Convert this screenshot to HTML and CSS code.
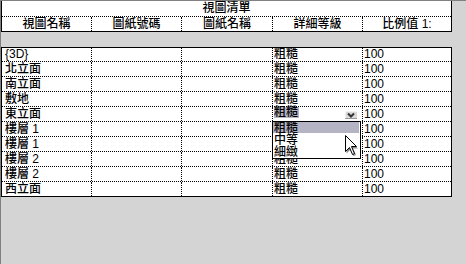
FILE: index.html
```html
<!DOCTYPE html>
<html lang="zh-Hant">
<head>
  <meta charset="UTF-8">
  <title>視圖清單</title>
  <link rel="stylesheet" href="styles.css">
</head>
<body>
  <div class="frame">
    <!-- 表頭 -->
    <div class="sheet-head">
      <div class="title">視圖清單</div>
      <div class="row head-row">
        <div class="cell">視圖名稱</div>
        <div class="cell">圖紙號碼</div>
        <div class="cell">圖紙名稱</div>
        <div class="cell">詳細等級</div>
        <div class="cell">比例值 1:</div>
      </div>
    </div>

    <div class="gap"></div>

    <!-- 表身 -->
    <div class="sheet-body">
      <div class="row first">
        <div class="cell name">{3D}</div><div class="cell"></div><div class="cell"></div>
        <div class="cell">粗糙</div><div class="cell">100</div>
      </div>
      <div class="row">
        <div class="cell name">北立面</div><div class="cell"></div><div class="cell"></div>
        <div class="cell">粗糙</div><div class="cell">100</div>
      </div>
      <div class="row">
        <div class="cell name">南立面</div><div class="cell"></div><div class="cell"></div>
        <div class="cell">粗糙</div><div class="cell">100</div>
      </div>
      <div class="row">
        <div class="cell name">敷地</div><div class="cell"></div><div class="cell"></div>
        <div class="cell">粗糙</div><div class="cell">100</div>
      </div>
      <div class="row">
        <div class="cell name">東立面</div><div class="cell"></div><div class="cell"></div>
        <div class="cell combo">
          <span class="picked">粗糙</span>
          <span class="combo-btn">
            <svg width="12" height="8" viewBox="0 0 12 8">
              <rect x="0" y="0" width="12" height="8" fill="#d9d9d9"/>
              <line x1="0" y1="0.5" x2="12" y2="0.5" stroke="#f2f2f2"/>
              <line x1="0.5" y1="0" x2="0.5" y2="8" stroke="#f2f2f2"/>
              <line x1="0" y1="7.5" x2="12" y2="7.5" stroke="#9a9a9a"/>
              <path d="M3 2.5 L6 5.5 L9 2.5" fill="none" stroke="#333" stroke-width="2"/>
            </svg>
          </span>
          <!-- 下拉清單 -->
          <div class="combo-list">
            <div class="option active">粗糙</div>
            <div class="option">中等</div>
            <div class="option">細緻</div>
          </div>
        </div>
        <div class="cell">100</div>
      </div>
      <div class="row">
        <div class="cell name">樓層 1</div><div class="cell"></div><div class="cell"></div>
        <div class="cell hidden-under">粗糙</div><div class="cell">100</div>
      </div>
      <div class="row">
        <div class="cell name">樓層 1</div><div class="cell"></div><div class="cell"></div>
        <div class="cell hidden-under">粗糙</div><div class="cell">100</div>
      </div>
      <div class="row">
        <div class="cell name">樓層 2</div><div class="cell"></div><div class="cell"></div>
        <div class="cell">粗糙</div><div class="cell">100</div>
      </div>
      <div class="row">
        <div class="cell name">樓層 2</div><div class="cell"></div><div class="cell"></div>
        <div class="cell">粗糙</div><div class="cell">100</div>
      </div>
      <div class="row last">
        <div class="cell name">西立面</div><div class="cell"></div><div class="cell"></div>
        <div class="cell">粗糙</div><div class="cell">100</div>
      </div>
    </div>
  </div>

  <!-- 滑鼠游標 -->
  <svg class="cursor" width="14" height="22" viewBox="0 0 14 22">
    <path d="M1.5 2.5 L1.5 18.5 L5.5 14.5 L8.5 21 L11 20 L8 13.5 L13 13.5 Z" fill="#8c8c8c"/>
    <path d="M0.5 0.5 L0.5 16.5 L4.5 12.5 L7.5 19.5 L9.5 18.5 L6.5 11.5 L11.5 11.5 Z" fill="#fff" stroke="#000" stroke-width="1"/>
  </svg>
</body>
</html>
```

FILE: styles.css
```css
body {
  margin: 0;
  background: #d4d4d4;
  font-family: "Liberation Sans", "Noto Sans CJK TC", sans-serif;
  font-size: 12px;
  font-weight: 500;
  color: #000;
  height: 264px;
  overflow: hidden;
}

/* 外框 (凹陷邊) */
.frame {
  border-top: 1px solid #808080;
  border-left: 1px solid #808080;
  height: 263px;
}

.sheet-head,
.sheet-body {
  width: 451px;
  box-sizing: border-box;
  background: #fff;
  border-left: 1px solid #000;
  border-right: 1px solid #000;
  border-bottom: 1px solid #000;
}

.sheet-body {
  border-top: 1px solid #000;
}

.title {
  height: 15px;
  line-height: 15px;
  text-align: center;
  border-bottom: 1px dotted #000;
}

.gap {
  height: 15px;
}

.row {
  display: grid;
  grid-template-columns: 90px 90px 91px 90px 88px;
  height: 14px;
  border-bottom: 1px dotted #000;
}

.row.first {
  height: 13px;
}

.row.last,
.head-row {
  border-bottom: none;
}

.cell {
  box-sizing: border-box;
  border-right: 1px dotted #000;
  line-height: 14px;
  padding-left: 1px;
  white-space: nowrap;
}

.cell:last-child {
  border-right: none;
}

.cell.name {
  padding-left: 3px;
}

.head-row .cell {
  text-align: center;
  padding-left: 0;
}

.first .cell {
  line-height: 13px;
}

/* 被下拉清單蓋住的格子 */
.hidden-under {
  color: transparent;
}

/* 詳細等級下拉 */
.combo {
  position: relative;
  display: flex;
  align-items: flex-start;
}

.picked {
  background: #b4b4c4;
  line-height: 11px;
  height: 11px;
  padding: 0 1px 0 0;
}

.combo-btn {
  display: block;
  margin: 4px 5px 0 auto;
  width: 12px;
  height: 8px;
}

.combo-btn svg {
  display: block;
}

.combo-list {
  position: absolute;
  left: -1px;
  top: 14px;
  width: 89px;
  height: 38px;
  box-sizing: border-box;
  border: 1px solid #000;
  background: #fff;
  z-index: 2;
}

.option {
  height: 12px;
  line-height: 12px;
  padding-left: 1px;
}

.option.active {
  background: #b4b4c4;
  height: 11px;
  margin-right: 1px;
  margin-bottom: 1px;
}

.cursor {
  position: absolute;
  left: 345px;
  top: 135px;
  z-index: 3;
}
```
